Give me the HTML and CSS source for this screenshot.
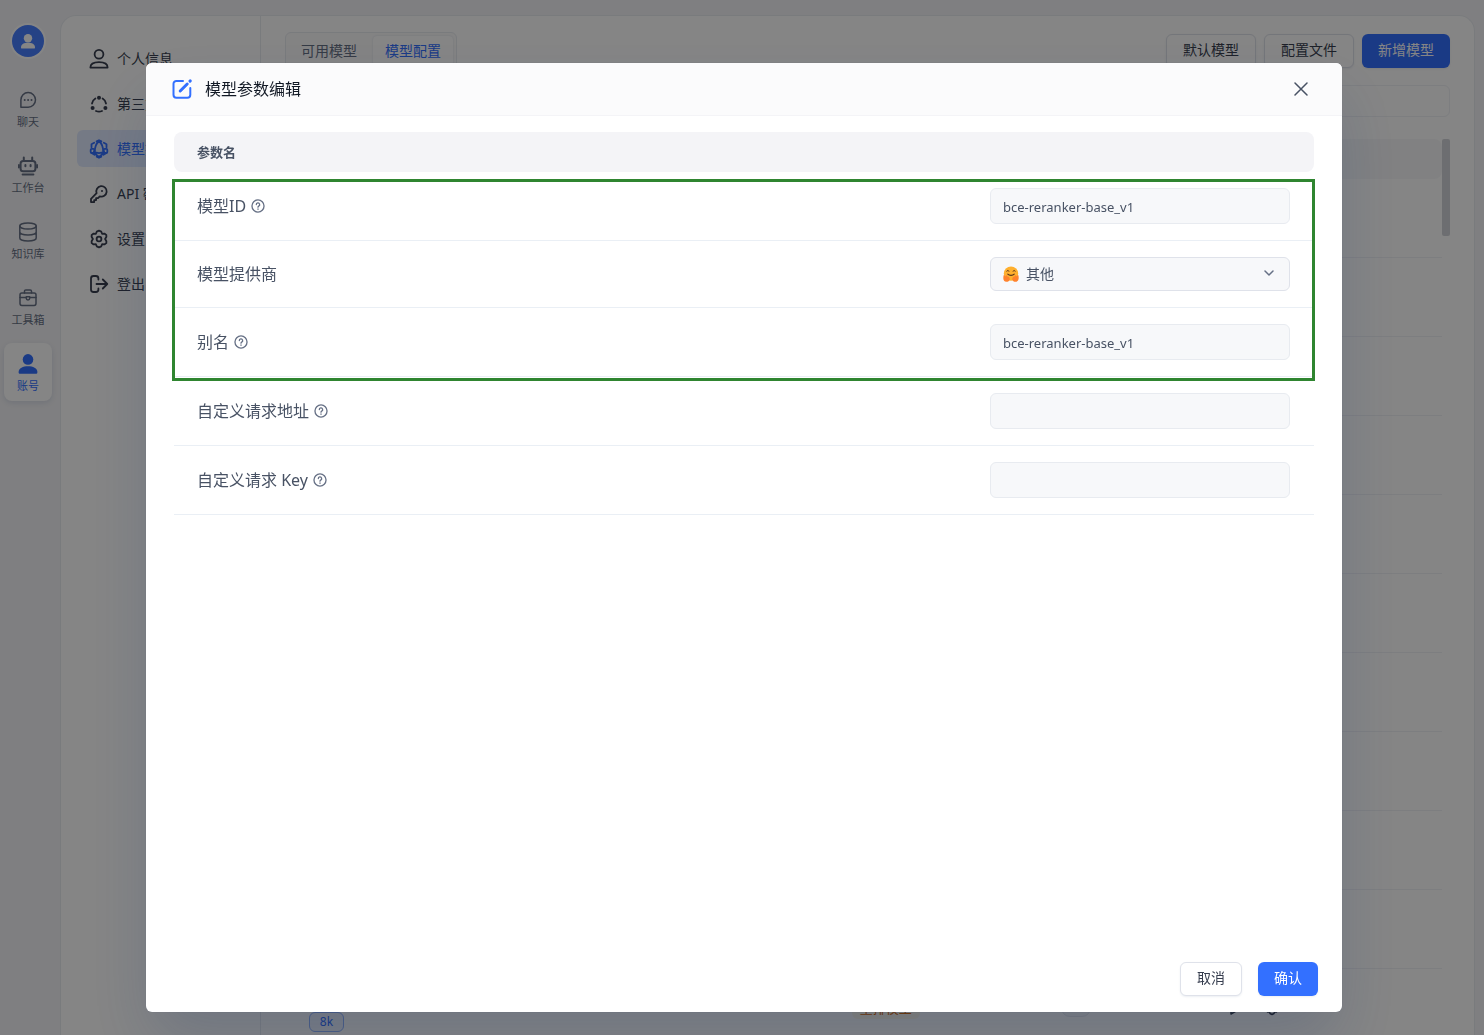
FILE: index.html
```html
<!DOCTYPE html>
<html lang="zh-CN">
<head>
<meta charset="utf-8">
<meta name="viewport" content="width=device-width, initial-scale=1">
<title>模型配置</title>
<link rel="stylesheet" href="styles.css">
</head>
<body>
<div class="app">
  <nav class="rail" aria-label="主导航">
    <span class="avatar"><svg viewBox="0 0 32 32"><circle cx="16" cy="13.2" r="4.2"/><path d="M9 22.400c0-3.400 3.200-4.600 7-4.600s7 1.200 7 4.600c0 .8-.5 1.200-1.300 1.200H10.300c-.8 0-1.300-.4-1.300-1.200z"/></svg></span>
    <a class="rail-item" href="#">
      <svg class="rail-icon" viewBox="0 0 20 20"><path d="M2.900 17.200V10a7.300 7.300 0 1 1 7.300 7.200z"/><path class="dots" d="M6.700 10h.01M10.100 10h.01M13.500 10h.01"/></svg>聊天</a>
    <a class="rail-item" href="#">
      <svg class="rail-icon robot" viewBox="0 0 20 20"><path d="M5.800 1.500v3M14.200 1.500v3M.9 9v2.500M19.100 9v2.500M4.600 18.600h10.800"/><rect x="2.600" y="4.900" width="14.800" height="10.400" rx="2.600"/><path d="M7.400 9v1.200M12.600 9v1.200"/></svg>工作台</a>
    <a class="rail-item" href="#">
      <svg class="rail-icon" viewBox="0 0 20 20"><ellipse cx="10" cy="4" rx="8.200" ry="3"/><path d="M1.800 4v12c0 1.700 3.700 3 8.200 3s8.200-1.300 8.200-3V4M1.800 10c0 1.700 3.700 3 8.200 3s8.200-1.300 8.200-3"/></svg>知识库</a>
    <a class="rail-item" href="#">
      <svg class="rail-icon" viewBox="0 0 20 20"><rect x="2" y="5" width="16" height="12.400" rx="1.800"/><path d="M6.500 5V3.200a1.300 1.300 0 0 1 1.300-1.300h4.400a1.300 1.300 0 0 1 1.300 1.300V5M2 9.500h6M12 9.500h6"/><path d="M8.300 8.800h3.400v1.500a1.700 1.700 0 0 1-3.400 0z"/></svg>工具箱</a>
    <a class="rail-item rail-active" href="#" aria-current="page">
      <svg class="rail-icon" viewBox="0 0 20 20"><circle cx="10" cy="5.400" r="5.300"/><path d="M.6 18.200c0-4.200 4.400-6 9.400-6s9.400 1.800 9.400 6c0 1-.6 1.600-1.600 1.600H2.200c-1 0-1.600-.6-1.600-1.600z"/></svg>账号</a>
  </nav>

  <div class="panel">
    <nav class="menu" aria-label="账号">
      <a class="menu-item" href="#"><svg viewBox="0 0 20 20"><circle cx="10" cy="5.300" r="4.400"/><path d="M1.400 18.600c0-3.400 3-5.400 8.600-5.400s8.600 2 8.600 5.400z"/></svg>个人信息</a>
      <a class="menu-item" href="#"><svg viewBox="0 0 20 20"><path d="M6.400 4.500a7.200 7.200 0 0 0-3.400 5M13.600 4.500a7.200 7.200 0 0 1 3.400 5M7 17a7.200 7.200 0 0 0 6 0"/><path class="nodes" d="M10 3.700h.01M3.600 14h.01M16.400 14h.01"/></svg>第三方账号</a>
      <a class="menu-item menu-active" href="#" aria-current="page"><svg viewBox="0 0 20 20"><path d="M10 2.200c-3 2.300-4.200 6-4.200 10.600M10 2.200c3 2.300 4.200 6 4.200 10.600M5 12.500c3 1.900 7 1.900 10 0M7.600 2.300 10 1.200l2.400 1.100M5.200 3.700 2.500 5.200v3M14.800 3.700l2.700 1.500v3M3 14.300l2.500 1.400M17 14.300l-2.500 1.400M7.700 17.600l2.300 1.200 2.300-1.200M5.800 14.500 10 18l4.200-3.500"/><rect x="1.700" y="9.800" width="3.600" height="4.200" rx="1"/><rect x="14.700" y="9.800" width="3.600" height="4.200" rx="1"/></svg>模型提供商</a>
      <a class="menu-item" href="#"><svg viewBox="0 0 20 20"><path d="M7.600 9.200a5.200 5.200 0 1 1 3.200 3.100L9 14.100H7.100v2H5.200v2H2v-3.200z"/><path class="dots" d="M13 7h.01"/></svg>API 密钥</a>
      <a class="menu-item" href="#"><svg viewBox="0 0 20 20"><path d="m10 1.700 2.300 1 .8 2.100 2.300-.2 1.900 1.300.1 1.900-1.300 2.200 1.300 2.200-.1 1.900-1.900 1.300-2.300-.2-.8 2.100-2.300 1-2.300-1-.8-2.100-2.300.2-1.900-1.300-.1-1.900L3.900 10 2.600 7.800l.1-1.900 1.900-1.300 2.300.2.800-2.100z"/><circle cx="10" cy="10" r="2.400"/></svg>设置</a>
      <a class="menu-item" href="#"><svg viewBox="0 0 20 20"><path d="M9.400 5.500V4.500a2.500 2.500 0 0 0-2.500-2.500H4.500A2.500 2.500 0 0 0 2 4.500v11a2.500 2.500 0 0 0 2.500 2.500h2.400a2.500 2.500 0 0 0 2.500-2.500v-1M7.500 10h10.800M13.800 5.500l4.500 4.500-4.500 4.500"/></svg>登出</a>
    </nav>

    <main class="content">
      <div class="toolbar">
        <div class="tabs">
          <button class="tab" type="button">可用模型</button>
          <button class="tab tab-active" type="button">模型配置</button>
        </div>
        <div class="actions">
          <button class="button" type="button">默认模型</button>
          <button class="button" type="button">配置文件</button>
          <button class="button button-primary" type="button">新增模型</button>
        </div>
      </div>
      <input class="search" type="text" aria-label="搜索模型">
      <div class="list">
        <table class="models">
          <thead><tr><th></th><th></th><th></th><th></th></tr></thead>
          <tbody>
            <tr><td></td><td></td><td></td><td></td></tr>
            <tr><td></td><td></td><td></td><td></td></tr>
            <tr><td></td><td></td><td></td><td></td></tr>
            <tr><td></td><td></td><td></td><td></td></tr>
            <tr><td></td><td></td><td></td><td></td></tr>
            <tr><td></td><td></td><td></td><td></td></tr>
            <tr><td></td><td></td><td></td><td></td></tr>
            <tr><td></td><td></td><td></td><td></td></tr>
            <tr><td></td><td></td><td></td><td></td></tr>
            <tr><td></td><td></td><td></td><td></td></tr>
            <tr>
              <td class="model-cell"><span class="tag">8k</span></td>
              <td><span class="kind">重排模型</span></td>
              <td><span class="switch"></span></td>
              <td><div class="row-icons"><svg viewBox="0 0 16 16"><path d="M3 2v12l10-6z"/></svg><svg viewBox="0 0 16 16"><path d="m8 1.500 2 1 .6 1.700 2-.1 1.400 2L12.800 8l1.200 1.900-1.400 2-2-.1-.6 1.700-2 1-2-1-.6-1.700-2 .1-1.400-2L3.200 8 2 6.100l1.400-2 2 .1L6 2.500z"/></svg></div></td>
            </tr>
          </tbody>
        </table>
        <span class="scrollbar"></span>
      </div>
    </main>
  </div>
</div>

<div class="overlay">
  <section class="dialog" role="dialog" aria-modal="true" aria-labelledby="dialog-title">
    <header class="dialog-header">
      <svg class="edit-icon" viewBox="0 0 20 20"><path d="M11 1.900H4.400a2.900 2.900 0 0 0-2.900 2.900v11a2.900 2.900 0 0 0 2.900 2.900h11a2.900 2.900 0 0 0 2.900-2.900V9"/><path class="pen" d="m8.200 12 7-7"/><path class="pen" d="m18 2.100.2-.2"/></svg>
      <h1 class="dialog-title" id="dialog-title">模型参数编辑</h1>
      <button class="close" type="button" aria-label="关闭"><svg viewBox="0 0 14 14"><path d="m1 1 12 12M13 1 1 13"/></svg></button>
    </header>
    <div class="dialog-body">
      <table class="params">
        <thead><tr><th>参数名</th><th></th></tr></thead>
        <tbody>
          <tr>
            <td><label class="name" for="model-id">模型ID<svg class="help" viewBox="0 0 16 16"><circle cx="8" cy="8" r="6.900"/><path d="M6.100 6.400a1.900 1.900 0 1 1 2.700 1.700c-.5.300-.8.600-.8 1.200"/><path d="M8 11.400v.3"/></svg></label></td>
            <td class="field"><input class="input" id="model-id" type="text" value="bce-reranker-base_v1"></td>
          </tr>
          <tr>
            <td><label class="name" for="provider">模型提供商</label></td>
            <td class="field">
              <div class="select-wrap">
                <select class="select" id="provider"><option>其他</option></select>
                <svg class="hug" viewBox="0 0 16 16"><circle cx="8" cy="7.600" r="7.200" fill="#ffb02e"/><path d="M3.800 5.200c.3-1.100 1.800-1.100 2.100 0M10.100 5.200c.3-1.100 1.800-1.100 2.100 0" fill="none" stroke="#5a341c" stroke-width="1"/><path d="M4.800 8.200c1.500 1.500 4.900 1.500 6.400 0" fill="none" stroke="#5a341c" stroke-width="1.200"/><path d="M.5 9.600c1-.8 1.700 0 2 1l.7-.9c.7-.8 1.500 0 1 .9 1.500-.3 2.700 1 2.500 2.800-.2 1.500-1.600 2.400-3.300 2.400C1.300 15.800.3 14 .3 12zM15.500 9.600c-1-.8-1.700 0-2 1l-.7-.9c-.7-.8-1.500 0-1 .9-1.500-.3-2.700 1-2.500 2.800.2 1.500 1.600 2.400 3.300 2.400 2.100 0 3.100-1.800 3.100-3.800z" fill="#ff822d"/></svg>
                <svg class="chevron" viewBox="0 0 12 12"><path d="m2 4 4 4 4-4"/></svg>
              </div>
            </td>
          </tr>
          <tr>
            <td><label class="name" for="alias">别名<svg class="help" viewBox="0 0 16 16"><circle cx="8" cy="8" r="6.900"/><path d="M6.100 6.400a1.900 1.900 0 1 1 2.700 1.700c-.5.300-.8.600-.8 1.200"/><path d="M8 11.400v.3"/></svg></label></td>
            <td class="field"><input class="input" id="alias" type="text" value="bce-reranker-base_v1"></td>
          </tr>
          <tr>
            <td><label class="name" for="url">自定义请求地址<svg class="help" viewBox="0 0 16 16"><circle cx="8" cy="8" r="6.900"/><path d="M6.100 6.400a1.900 1.900 0 1 1 2.700 1.700c-.5.300-.8.600-.8 1.200"/><path d="M8 11.400v.3"/></svg></label></td>
            <td class="field"><input class="input" id="url" type="text"></td>
          </tr>
          <tr>
            <td><label class="name" for="key">自定义请求 Key<svg class="help" viewBox="0 0 16 16"><circle cx="8" cy="8" r="6.900"/><path d="M6.100 6.400a1.900 1.900 0 1 1 2.700 1.700c-.5.300-.8.600-.8 1.200"/><path d="M8 11.400v.3"/></svg></label></td>
            <td class="field"><input class="input" id="key" type="text"></td>
          </tr>
        </tbody>
      </table>
      <span class="highlight"></span>
    </div>
    <footer class="dialog-footer">
      <button class="button" type="button">取消</button>
      <button class="button button-primary" type="button">确认</button>
    </footer>
  </section>
</div>
</body>
</html>
```
FILE: styles.css
```css
* {
  box-sizing: border-box;
}

body {
  margin: 0;
  height: 100vh;
  overflow: hidden;
  background: #f4f4f7;
  color: #383f50;
  font: 14px/20px "Noto Sans", "Noto Sans CJK SC", sans-serif;
}

a {
  color: inherit;
  text-decoration: none;
}

button,
input,
select {
  margin: 0;
  font: inherit;
  color: inherit;
}

svg {
  flex: none;
  fill: none;
  stroke: currentColor;
  stroke-width: 1.5;
  stroke-linecap: round;
  stroke-linejoin: round;
}

.app {
  display: flex;
  height: 100vh;
  overflow: hidden;
}

/* Left icon rail */
.rail {
  display: flex;
  flex: none;
  flex-direction: column;
  align-items: center;
  gap: 8px;
  width: 56px;
  padding-top: 25px;
}

.avatar {
  width: 32px;
  height: 32px;
  margin-bottom: 14px;
  border-radius: 50%;
  background: #487fff;
  box-shadow: 0 0 0 2px #fff;
}

.avatar svg {
  display: block;
  fill: #fff;
  stroke: none;
}

.rail-item {
  display: flex;
  flex-direction: column;
  align-items: center;
  gap: 4px;
  width: 48px;
  height: 58px;
  padding-top: 11px;
  border-radius: 8px;
  color: #667085;
  font-size: 11px;
  line-height: 16px;
}

.rail-icon {
  width: 20px;
  height: 20px;
}

.robot {
  stroke-width: 2;
}

.rail-active {
  background: #fff;
  color: #3370ff;
  box-shadow: 0 2px 6px rgba(19, 51, 107, 0.12);
}

.rail-active .rail-icon {
  fill: currentColor;
  stroke: none;
}

.dots {
  stroke-width: 2;
}

/* Account panel */
.panel {
  display: flex;
  flex: 1;
  min-width: 0;
  margin: 15px 9px 0 4px;
  border: 1px solid #e8ebf0;
  border-bottom: 0;
  border-radius: 16px 16px 0 0;
  background: #fff;
}

.menu {
  display: flex;
  flex: none;
  flex-direction: column;
  gap: 8px;
  width: 200px;
  padding: 24px 16px;
  border-right: 1px solid #e8ebf0;
}

.menu-item {
  display: flex;
  align-items: center;
  gap: 8px;
  height: 37px;
  padding: 0 12px;
  border-radius: 6px;
}

.menu-item svg {
  width: 20px;
  height: 20px;
  stroke-width: 1.8;
}

.menu-item .nodes {
  stroke-width: 4;
}

.menu-active {
  background: #e1eaff;
  color: #3370ff;
}

.content {
  display: flex;
  flex: 1;
  flex-direction: column;
  min-width: 0;
  padding: 16px 24px 0;
}

.toolbar {
  display: flex;
  align-items: center;
  justify-content: space-between;
  height: 38px;
}

.tabs {
  display: flex;
  gap: 4px;
  height: 38px;
  padding: 3px;
  border: 1px solid #e8ebf0;
  border-radius: 6px;
  background: #fbfbfc;
}

.tab {
  width: 80px;
  padding: 0;
  border: 0;
  border-radius: 4px;
  background: none;
  color: #667085;
}

.tab-active {
  background: #fff;
  color: #3370ff;
  box-shadow: 0 0 2px rgba(19, 51, 107, 0.15);
}

.actions,
.dialog-footer {
  display: flex;
  gap: 8px;
}

.button {
  height: 34px;
  padding: 0 16px 2px;
  border: 1px solid #dfe2ea;
  border-radius: 6px;
  background: #fff;
  box-shadow: 0 1px 2px rgba(19, 51, 107, 0.08);
}

.button-primary {
  border: 0;
  background: #3370ff;
  color: #fff;
}

.search {
  width: 100%;
  height: 32px;
  margin: 15px 0 22px;
  border: 1px solid #f0f1f6;
  border-radius: 6px;
  background: #fff;
}

.list {
  display: flex;
  flex: 1;
  min-height: 0;
  overflow: hidden;
}

.models {
  flex: 1;
  height: 0;
  table-layout: fixed;
  border-collapse: separate;
  border-spacing: 0;
}

.models th {
  height: 40px;
  padding: 0;
  background: #f7f8fa;
}

.models th:nth-child(1) {
  width: 40%;
  border-radius: 8px 0 0 8px;
}

.models th:nth-child(2),
.models th:nth-child(3) {
  width: 18%;
}

.models th:last-child {
  border-radius: 0 8px 8px 0;
}

.models td {
  height: 79px;
  padding: 0 24px;
  border-bottom: 1px solid #f0f1f6;
}

.models .model-cell {
  padding: 28px 24px 0;
}

.tag {
  display: block;
  width: 35px;
  height: 20px;
  border: 1px solid #94b5ff;
  border-radius: 6px;
  background: #f0f4ff;
  color: #3370ff;
  font-size: 12px;
  line-height: 18px;
  text-align: center;
}

.kind {
  display: inline-block;
  margin-left: 80px;
  padding: 2px 8px;
  border-radius: 6px;
  background: #fffaeb;
  color: #dc6803;
  font-size: 13px;
  line-height: 18px;
}

.switch {
  display: block;
  width: 30px;
  height: 18px;
  margin-left: 81px;
  border: 1px solid #e8ebf0;
  border-radius: 9px;
  background: #f7f8fa;
}

.row-icons {
  display: flex;
  gap: 20px;
  margin-left: 40px;
}

.row-icons svg {
  width: 16px;
  height: 16px;
}

.scrollbar {
  flex: none;
  width: 8px;
  height: 97px;
  border-radius: 2px;
  background: #d2d4d9;
}

/* Parameter dialog */
.overlay {
  position: fixed;
  inset: 0;
  display: flex;
  padding: 63px 142px 23px 146px;
  background: rgba(0, 0, 0, 0.48);
}

.dialog {
  display: flex;
  flex: 1;
  flex-direction: column;
  min-width: 0;
  overflow: hidden;
  border-radius: 6px;
  background: #fff;
  box-shadow: 0 32px 64px -4px rgba(19, 51, 107, 0.2), 0 0 1px rgba(19, 51, 107, 0.2);
}

.dialog-header {
  display: flex;
  align-items: center;
  gap: 13px;
  height: 53px;
  padding: 0 32px 0 26px;
  border-bottom: 1px solid #f4f4f7;
  background: #fbfbfc;
}

.edit-icon {
  width: 20px;
  height: 20px;
  color: #3370ff;
  stroke-width: 2;
}

.edit-icon .pen {
  stroke-width: 3;
}

.dialog-title {
  flex: 1;
  margin: 0;
  color: #111824;
  font-size: 16px;
  font-weight: 400;
  line-height: 24px;
}

.close {
  display: flex;
  align-items: center;
  justify-content: center;
  width: 18px;
  height: 24px;
  padding: 0;
  border: 0;
  background: none;
  color: #485264;
}

.close svg {
  width: 14px;
  height: 14px;
}

.dialog-body {
  position: relative;
  flex: 1;
  padding: 16px 28px;
}

.params {
  width: 100%;
  border-collapse: separate;
  border-spacing: 0;
  color: #485264;
}

.params th {
  height: 40px;
  padding: 0 23px;
  background: #f4f4f7;
  font-size: 13px;
  font-weight: 700;
  text-align: left;
}

.params th:first-child {
  border-radius: 8px 0 0 8px;
}

.params th:last-child {
  border-radius: 0 8px 8px 0;
}

.params td {
  padding: 16px 24px 16px 23px;
  border-bottom: 1px solid #eaeff5;
}

.params .field {
  width: 347px;
}

.name {
  display: flex;
  align-items: center;
  gap: 5px;
  font-size: 16px;
  line-height: 24px;
}

.help {
  width: 14px;
  height: 14px;
  color: #667085;
}

.input,
.select {
  display: block;
  width: 300px;
  border: 1px solid #e8ebf0;
  border-radius: 6px;
  background: #f7f8fa;
}

.input {
  height: 36px;
  padding: 2px 12px 0;
  font-size: 13px;
}

.select-wrap {
  position: relative;
}

.select {
  height: 34px;
  padding: 0 35px;
  border-color: #dfe2ea;
  appearance: none;
}

.hug,
.chevron {
  position: absolute;
  pointer-events: none;
}

.hug {
  top: 9px;
  left: 13px;
  width: 16px;
  height: 16px;
  stroke: none;
}

.chevron {
  top: 10px;
  right: 15px;
  width: 12px;
  height: 12px;
  color: #667085;
}

/* Frame over the first three parameters */
.highlight {
  position: absolute;
  top: 63px;
  right: 27px;
  left: 26px;
  height: 202px;
  border: 3px solid #2f8530;
  pointer-events: none;
}

.dialog-footer {
  justify-content: flex-end;
  gap: 16px;
  padding: 16px 24px;
}
```
